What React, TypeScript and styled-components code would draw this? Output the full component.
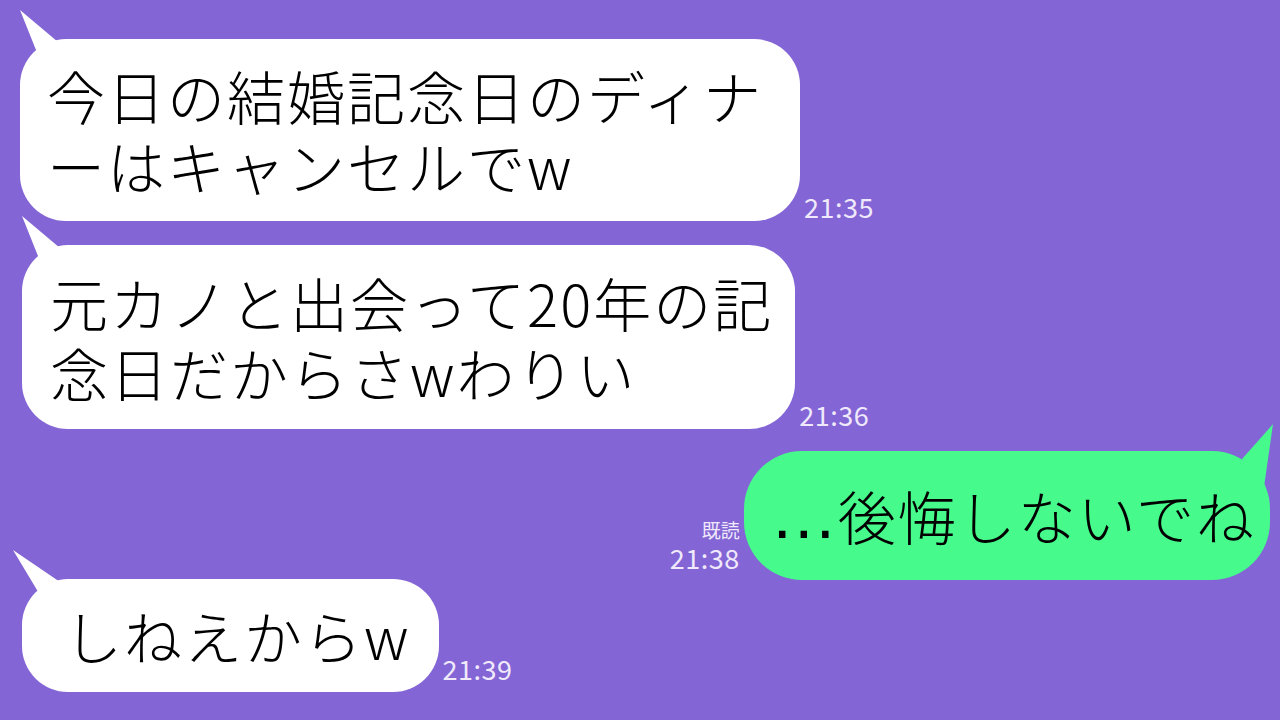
import React from 'react';
import styled, { createGlobalStyle } from 'styled-components';

const BG = '#8465d5';
const GREEN = '#46fb8c';
const TIME = '#efe9fb';

const GlobalStyle = createGlobalStyle`
  html, body {
    margin: 0;
    padding: 0;
    background: ${BG};
  }
  body {
    width: 1280px;
    height: 720px;
    overflow: hidden;
    font-family: 'Noto Sans CJK JP', 'Noto Sans', sans-serif;
  }
`;

const Screen = styled.div`
  width: 1280px;
  height: 720px;
  box-sizing: border-box;
  padding: 0 10px 0 20px;
  display: flex;
  flex-direction: column;
  background: ${BG};
`;

const Row = styled.div<{ $top: number; $mine?: boolean; $indent?: number }>`
  display: flex;
  align-items: flex-end;
  justify-content: ${p => (p.$mine ? 'flex-end' : 'flex-start')};
  gap: 4px;
  margin-top: ${p => p.$top}px;
  padding-left: ${p => p.$indent ?? 0}px;
`;

const Bubble = styled.div<{ $pad: string; $mine?: boolean; $radius?: number }>`
  position: relative;
  padding: ${p => p.$pad};
  background: ${p => (p.$mine ? GREEN : '#fff')};
  border-radius: ${p => p.$radius ?? 46}px;
  color: #000;
  font-size: 58px;
  font-weight: 300;
  line-height: 70px;
  letter-spacing: 2px;
  white-space: nowrap;
`;

const Line = styled.div`
  height: 70px;
`;

// the leading ellipsis sits low, with widely spaced dots
const Dots = styled.span`
  display: inline-block;
  font-family: 'Liberation Sans', sans-serif;
  font-size: 68px;
  font-weight: 400;
  line-height: 0;
  letter-spacing: 0;
  vertical-align: 2px;
`;

const Tail = styled.svg<{ $mine?: boolean }>`
  position: absolute;
  top: -40px;
  ${p => (p.$mine ? 'right: -10px;' : 'left: -10px;')}
  width: 60px;
  height: 60px;
  overflow: visible;
`;

const Meta = styled.div<{ $lift?: number }>`
  display: flex;
  flex-direction: column;
  align-items: flex-end;
  margin-bottom: ${p => 1 + (p.$lift ?? 0)}px;
  color: ${TIME};
`;

const Read = styled.span`
  font-size: 19px;
  line-height: 28px;
`;

const Time = styled.span`
  font-size: 27px;
  line-height: 27px;
  letter-spacing: 0.5px;
`;

// speech tail drawn over the top corner of a bubble
function LeftTail({ shift = 0 }: { shift?: number }) {
  return (
    <Tail viewBox="0 0 60 60">
      <polygon points={`${10 + shift},11 48,43 28,56`} fill="#fff" />
    </Tail>
  );
}

function RightTail() {
  return (
    <Tail $mine viewBox="0 0 60 60">
      <polygon points="53,13 22,48 44,76" fill={GREEN} />
    </Tail>
  );
}

export default function App() {
  return (
    <>
      <GlobalStyle />
      <Screen>
        <Row $top={39}>
          <Bubble $pad="21px 37px 21px 27px">
            <LeftTail />
            <Line>今日の結婚記念日のディナ</Line>
            <Line>ーはキャンセルでw</Line>
          </Bubble>
          <Meta>
            <Time>21:35</Time>
          </Meta>
        </Row>

        <Row $top={24} $indent={2}>
          <Bubble $pad="22px 22px 22px 28px">
            <LeftTail />
            <Line>元カノと出会って20年の記</Line>
            <Line>念日だからさwわりい</Line>
          </Bubble>
          <Meta>
            <Time>21:36</Time>
          </Meta>
        </Row>

        <Row $top={22} $mine>
          <Meta $lift={8}>
            <Read>既読</Read>
            <Time>21:38</Time>
          </Meta>
          <Bubble $mine $radius={58} $pad="29px 14px 30px 26px">
            <RightTail />
            <Dots>…</Dots>後悔しないでね
          </Bubble>
        </Row>

        <Row $top={-1} $indent={2}>
          <Bubble $pad="21px 28px 22px 42px">
            <LeftTail shift={-9} />
            しねえからw
          </Bubble>
          <Meta $lift={9}>
            <Time>21:39</Time>
          </Meta>
        </Row>
      </Screen>
    </>
  );
}
